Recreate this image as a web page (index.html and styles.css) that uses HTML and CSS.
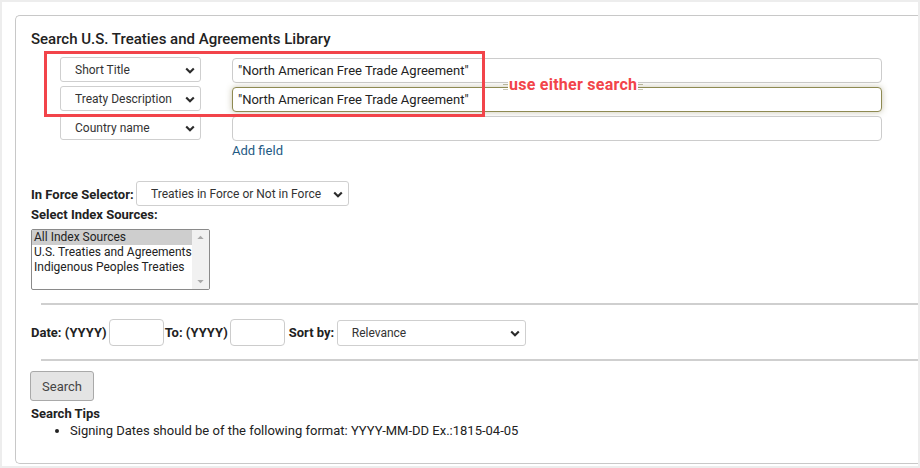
FILE: index.html
```html
<!DOCTYPE html>
<html lang="en">
<head>
<meta charset="utf-8">
<title>Search U.S. Treaties and Agreements Library</title>
<link rel="stylesheet" href="styles.css">
</head>
<body>
<div class="page">
  <div class="card">
    <h2 class="title">Search U.S. Treaties and Agreements Library</h2>

    <div class="fields">
      <div class="row">
        <div class="sel-wrap field-sel">
          <select class="sel"><option>Short Title</option></select>
          <svg class="chev" viewBox="0 0 10 7" aria-hidden="true"><path d="M1.2 1.4 5 5.2 8.8 1.4"/></svg>
        </div>
        <input class="txt" type="text" value="&quot;North American Free Trade Agreement&quot;">
      </div>
      <div class="row">
        <div class="sel-wrap field-sel">
          <select class="sel"><option>Treaty Description</option></select>
          <svg class="chev" viewBox="0 0 10 7" aria-hidden="true"><path d="M1.2 1.4 5 5.2 8.8 1.4"/></svg>
        </div>
        <input class="txt focus" type="text" value="&quot;North American Free Trade Agreement&quot;">
      </div>
      <div class="row">
        <div class="sel-wrap field-sel">
          <select class="sel"><option>Country name</option></select>
          <svg class="chev" viewBox="0 0 10 7" aria-hidden="true"><path d="M1.2 1.4 5 5.2 8.8 1.4"/></svg>
        </div>
        <input class="txt" type="text" value="">
      </div>
      <div class="add-row"><a class="add" href="#">Add field</a></div>

      <div class="annot-box"></div>
      <div class="annot-label"><span>use either search</span></div>
    </div>

    <div class="force-row">
      <label class="lbl">In Force Selector:</label>
      <div class="sel-wrap force-sel">
        <select class="sel"><option>Treaties in Force or Not in Force</option></select>
        <svg class="chev" viewBox="0 0 10 7" aria-hidden="true"><path d="M1.2 1.4 5 5.2 8.8 1.4"/></svg>
      </div>
    </div>
    <div class="lbl block">Select Index Sources:</div>
    <div class="listbox">
      <div class="opts">
        <div class="opt selected">All Index Sources</div>
        <div class="opt">U.S. Treaties and Agreements</div>
        <div class="opt">Indigenous Peoples Treaties</div>
      </div>
      <div class="sbar">
        <svg class="arr" viewBox="0 0 8 5"><path d="M0 5 4 1 8 5z"/></svg>
        <svg class="arr" viewBox="0 0 8 5"><path d="M0 0 4 4 8 0z"/></svg>
      </div>
    </div>

    <hr class="rule">

    <div class="date-row">
      <label class="lbl">Date: (YYYY)</label>
      <input class="year" type="text">
      <label class="lbl">To: (YYYY)</label>
      <input class="year" type="text">
      <label class="lbl sort-lbl">Sort by:</label>
      <div class="sel-wrap sort-sel">
        <select class="sel"><option>Relevance</option></select>
        <svg class="chev" viewBox="0 0 10 7" aria-hidden="true"><path d="M1.2 1.4 5 5.2 8.8 1.4"/></svg>
      </div>
    </div>

    <hr class="rule second">

    <button class="btn" type="button">Search</button>

    <div class="tips-title">Search Tips</div>
    <ul class="tips">
      <li>Signing Dates should be of the following format: YYYY-MM-DD Ex.:1815-04-05</li>
    </ul>
  </div>
</div>
</body>
</html>
```

FILE: styles.css
```css
* { box-sizing: border-box; }
html, body { margin: 0; padding: 0; }
body {
  background: #ededed;
  font-family: Roboto, "Liberation Sans", Arial, sans-serif;
  color: #222;
  width: 920px;
  height: 468px;
  overflow: hidden;
}
.page {
  margin: 2px 2px 0 2px;
  height: 464px;
  background: #fff;
  padding: 13px 0 0 13px;
}
.card {
  position: relative;
  height: 449px;
  border: 1px solid #c8c8c8;
  border-right: none;
  border-radius: 5px 0 0 5px;
  padding: 13px 0 0 15px;
}
.title {
  margin: 0;
  font-size: 15px;
  line-height: 20px;
  font-weight: 500;
  color: #222;
}
.fields {
  position: relative;
  margin-top: 8px;
  padding-left: 29px;
}
.row {
  display: flex;
  align-items: flex-start;
  gap: 31px;
  margin-bottom: 3px;
}
.sel-wrap { position: relative; }
.sel {
  appearance: none;
  -webkit-appearance: none;
  display: block;
  width: 100%;
  height: 25px;
  border: 1px solid #cfcfcf;
  border-radius: 3px;
  background: #fff;
  font-family: Roboto, "Liberation Sans", Arial, sans-serif;
  font-size: 12px;
  color: #333;
  padding: 0 24px 0 14px;
  margin: 0;
  outline: none;
}
.chev {
  position: absolute;
  right: 6px;
  top: 50%;
  margin-top: -3px;
  width: 10px;
  height: 7px;
  fill: none;
  stroke: #2b2b2b;
  stroke-width: 2.1;
}
.field-sel { width: 141px; flex: none; }
.txt {
  display: block;
  width: 650px;
  height: 25px;
  margin-top: 1px;
  border: 1px solid #cccccc;
  border-radius: 4px;
  padding: 0 5px;
  font-family: Roboto, "Liberation Sans", Arial, sans-serif;
  font-size: 13px;
  color: #222;
  background: #fff;
  outline: none;
}
.txt.focus {
  border-color: #8e8a52;
  box-shadow: 0 0 6px rgba(130, 125, 80, 0.45);
}
.add-row {
  padding-left: 172px;
  margin-top: -2px;
  line-height: 16px;
}
.add {
  font-size: 13px;
  color: #1f5a84;
  text-decoration: none;
}
.annot-box {
  position: absolute;
  left: 13px;
  top: -6px;
  width: 441px;
  height: 66px;
  border: 3px solid #f2444a;
  pointer-events: none;
}
.annot-label {
  position: absolute;
  left: 472px;
  top: 19px;
  display: flex;
  align-items: center;
}
.annot-label::before,
.annot-label::after {
  content: "";
  display: block;
  width: 5px;
  height: 4px;
  border-top: 1px solid #b7b59a;
  border-bottom: 1px solid #c9c7b4;
  margin-top: 4px;
}
.annot-label span {
  background: #fff;
  color: #f2444a;
  font-weight: 700;
  font-size: 16px;
  line-height: 17px;
  padding: 0 1px;
  letter-spacing: 0.25px;
}
.force-row {
  display: flex;
  align-items: center;
  margin-top: 22px;
  gap: 0;
}
.lbl {
  font-size: 13px;
  font-weight: 700;
  color: #222;
  line-height: 15px;
}
.force-row .lbl { width: 105px; padding-top: 1px; }
.force-sel { width: 213px; }
.force-sel .sel { padding-left: 14px; }
.block { display: block; margin-top: 1px; }
.listbox {
  display: flex;
  width: 179px;
  height: 61px;
  margin-top: 7px;
  border: 1px solid #8a8a8a;
  border-radius: 2px;
  background: #fff;
  overflow: hidden;
}
.opts { flex: 1; }
.opt {
  font-size: 12px;
  line-height: 15px;
  padding-left: 2px;
  color: #222;
  white-space: nowrap;
}
.opt.selected { background: #cecece; }
.sbar {
  width: 17px;
  background: #f1f1f1;
  display: flex;
  flex-direction: column;
  justify-content: space-between;
  align-items: center;
  padding: 5px 0 5px;
}
.arr { width: 7px; height: 4px; fill: #a8a8a8; }
.rule {
  margin: 13px 0 0 10px;
  border: none;
  height: 2px;
  background: #cfcfcf;
}
.rule.second { margin-top: 13px; }
.date-row {
  display: flex;
  align-items: center;
  margin-top: 14px;
  height: 27px;
}
.year {
  width: 55px;
  height: 27px;
  margin: 0 1px 0 2px;
  border: 1px solid #cccccc;
  border-radius: 4px;
  outline: none;
}
.sort-lbl { margin-left: 3px; width: 48px; }
.sort-sel { width: 189px; margin-top: 1px; }
.sort-sel .sel { height: 26px; }
.btn {
  display: block;
  margin-top: 10px;
  margin-left: -1px;
  width: 64px;
  height: 30px;
  background: #e4e4e4;
  border: 1px solid #a9a9a9;
  border-radius: 3px;
  font-family: Roboto, "Liberation Sans", Arial, sans-serif;
  font-size: 13px;
  color: #444;
  padding: 0;
}
.tips-title {
  margin-top: 5px;
  font-size: 13px;
  font-weight: 700;
  line-height: 15px;
}
.tips {
  margin: 2px 0 0 0;
  padding-left: 39px;
  font-size: 13px;
  line-height: 16px;
  color: #222;
}
```
